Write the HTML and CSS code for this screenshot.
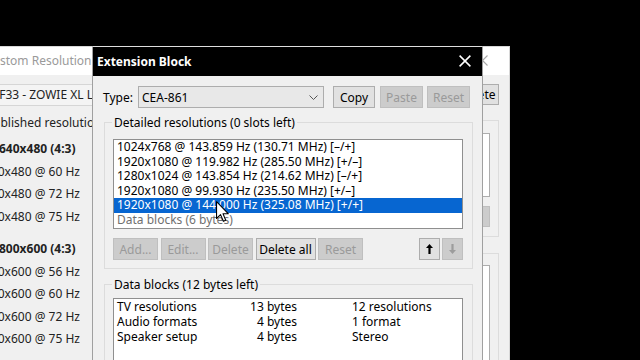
FILE: index.html
```html
<!DOCTYPE html>
<html lang="en">
<head>
    <meta charset="UTF-8">
    <meta name="viewport" content="width=device-width, initial-scale=1.0">
    <title>Extension Block</title>
    <link rel="stylesheet" href="styles.css">
</head>
<body>

    <!-- main CRU window, behind the dialog -->
    <div class="back-win">
        <div class="back-title">
            <span>Custom Resolution Utility</span>
            <svg class="back-close" width="11" height="11" viewBox="0 0 11 11">
                <path d="M0.5 0.5 L10.5 10.5 M10.5 0.5 L0.5 10.5" stroke="#a8a8a8" stroke-width="1.1" fill="none"/>
            </svg>
        </div>
        <div class="back-body">
            <div class="back-left">
                <div class="back-combo">BNQ7F33 - ZOWIE XL LCD</div>
                <fieldset class="back-group">
                    <legend>Established resolutions</legend>
                    <div class="res-head">640x480 (4:3)</div>
                    <div class="res-item">640x480 @ 60 Hz</div>
                    <div class="res-item">640x480 @ 72 Hz</div>
                    <div class="res-item">640x480 @ 75 Hz</div>
                    <div class="res-head next">800x600 (4:3)</div>
                    <div class="res-item">800x600 @ 56 Hz</div>
                    <div class="res-item">800x600 @ 60 Hz</div>
                    <div class="res-item">800x600 @ 72 Hz</div>
                    <div class="res-item">800x600 @ 75 Hz</div>
                </fieldset>
            </div>
            <div class="back-right">
                <button class="btn back-btn">Delete</button>
                <div class="back-box">
                    <div class="back-list"></div>
                    <div class="back-bar"></div>
                </div>
                <div class="back-box second">
                    <div class="back-list tall"></div>
                </div>
            </div>
        </div>
    </div>

    <!-- Extension Block dialog -->
    <div class="dialog">
        <div class="dlg-title">
            <span>Extension Block</span>
            <svg width="12" height="12" viewBox="0 0 12 12">
                <path d="M0.6 0.6 L11.4 11.4 M11.4 0.6 L0.6 11.4" stroke="#fff" stroke-width="1.5" fill="none"/>
            </svg>
        </div>
        <div class="dlg-body">
            <div class="type-row">
                <span class="type-label">Type:</span>
                <div class="combo">
                    <span>CEA-861</span>
                    <svg width="9" height="5" viewBox="0 0 9 5">
                        <path d="M0.5 0.5 L4.5 4.5 L8.5 0.5" stroke="#555" stroke-width="1" fill="none"/>
                    </svg>
                </div>
                <button class="btn btn-copy">Copy</button>
                <button class="btn btn-paste" disabled>Paste</button>
                <button class="btn btn-reset" disabled>Reset</button>
            </div>

            <fieldset class="group">
                <legend>Detailed resolutions (0 slots left)</legend>
                <ul class="listbox">
                    <li>1024x768 @ 143.859 Hz (130.71 MHz) [–/+]</li>
                    <li>1920x1080 @ 119.982 Hz (285.50 MHz) [+/–]</li>
                    <li>1280x1024 @ 143.854 Hz (214.62 MHz) [–/+]</li>
                    <li>1920x1080 @ 99.930 Hz (235.50 MHz) [+/–]</li>
                    <li class="selected">1920x1080 @ 144.000 Hz (325.08 MHz) [+/+]</li>
                    <li class="muted">Data blocks (6 bytes)</li>
                </ul>
                <div class="btn-row">
                    <button class="btn" disabled>Add...</button>
                    <button class="btn" disabled>Edit...</button>
                    <button class="btn" disabled>Delete</button>
                    <button class="btn btn-wide">Delete all</button>
                    <button class="btn" disabled>Reset</button>
                    <button class="btn btn-icon btn-up">
                        <svg width="7" height="10" viewBox="0 0 7 10"><path d="M3.5 0 L7 4 H4.6 V10 H2.4 V4 H0 Z" fill="#000"/></svg>
                    </button>
                    <button class="btn btn-icon" disabled>
                        <svg width="7" height="10" viewBox="0 0 7 10"><path d="M3.5 10 L7 6 H4.6 V0 H2.4 V6 H0 Z" fill="#9c9c9c"/></svg>
                    </button>
                </div>
            </fieldset>

            <fieldset class="group">
                <legend>Data blocks (12 bytes left)</legend>
                <div class="listbox data-list">
                    <span>TV resolutions</span><span class="size">13 bytes</span><span class="info">12 resolutions</span>
                    <span>Audio formats</span><span class="size">4 bytes</span><span class="info">1 format</span>
                    <span>Speaker setup</span><span class="size">4 bytes</span><span class="info">Stereo</span>
                </div>
            </fieldset>
        </div>
    </div>

    <svg class="cursor" width="13" height="22" viewBox="0 0 12 20">
        <path d="M0.5 0.5 L0.5 16 L4.2 12.4 L6.8 18.6 L9 17.7 L6.5 11.6 L11.3 11.6 Z" fill="#fff" stroke="#000" stroke-width="1" stroke-linejoin="round"/>
    </svg>

</body>
</html>
```

FILE: styles.css
```css
* {
    box-sizing: border-box;
}

body {
    margin: 0;
    width: 640px;
    height: 360px;
    overflow: hidden;
    position: relative;
    background-color: #000;
    font-family: "Noto Sans", sans-serif;
    font-size: 12px;
    color: #000;
}

.btn {
    height: 22px;
    padding: 0;
    border: 1px solid #adadad;
    background-color: #e1e1e1;
    font: inherit;
    color: #000;
    display: flex;
    align-items: center;
    justify-content: center;
    white-space: nowrap;
    overflow: hidden;
}

.btn:disabled {
    background-color: #cccccc;
    border-color: #bfbfbf;
    color: #9a9a9a;
}

/* ---- window behind ---- */

.back-win {
    position: absolute;
    left: -60px;
    top: 46px;
    width: 570px;
    height: 330px;
    background-color: #f0f0f0;
    border: 1px solid #d8d8d8;
    display: flex;
    flex-direction: column;
}

.back-title {
    height: 28px;
    flex-shrink: 0;
    background-color: #fff;
    color: #9a9a9a;
    display: flex;
    align-items: center;
    justify-content: space-between;
    padding: 0 21px 2px 44px;
}

.back-body {
    flex: 1;
    display: flex;
    padding-right: 10px;
}

.back-left {
    flex: 1;
    padding-left: 21px;
}

.back-combo {
    margin-top: 9px;
    height: 22px;
    line-height: 20px;
    padding-left: 3px;
    border: 1px solid #d6d6d6;
    background-color: #f4f4f4;
    color: #222;
}

.back-group {
    margin: 9px 0 0 0;
    padding: 8px 12px 0 12px;
    border: 1px solid #dcdcdc;
    height: 300px;
}

.back-group legend {
    padding: 0 2px;
    line-height: 15px;
    color: #222;
}

.res-head {
    line-height: 22.5px;
    padding-left: 24px;
    font-weight: bold;
    color: #222;
}

.res-head.next {
    margin-top: 10px;
}

.res-item {
    line-height: 22.5px;
    padding-left: 9px;
    color: #222;
}

.back-right {
    width: 90px;
    display: flex;
    flex-direction: column;
    align-items: flex-end;
}

.back-btn {
    margin-top: 9px;
    width: 44px;
    height: 21px;
    padding: 0 3px;
    justify-content: flex-start;
}

.back-box {
    align-self: stretch;
    margin-top: 15px;
    height: 117px;
    border: 1px solid #dcdcdc;
    padding: 12px 8px 0 0;
}

.back-box.second {
    margin-top: 16px;
    height: 150px;
    padding-top: 11px;
}

.back-list {
    height: 64px;
    background-color: #fff;
    border: 1px solid #adadad;
}

.back-list.tall {
    height: 140px;
}

.back-bar {
    margin: 9px 0 0 auto;
    width: 70px;
    height: 21px;
    background-color: #cccccc;
    border: 1px solid #bfbfbf;
}

/* ---- Extension Block dialog ---- */

.dialog {
    position: absolute;
    left: 92px;
    top: 46px;
    width: 391px;
    height: 330px;
    background-color: #f0f0f0;
    border: 1px solid #a0a0a0;
    border-top-color: #dedede;
}

.dlg-title {
    height: 29px;
    background-color: #000;
    color: #fff;
    font-weight: bold;
    display: flex;
    align-items: center;
    justify-content: space-between;
    padding: 0 11px 1px 4px;
}

.dlg-body {
    padding: 10px 10px 0 10px;
}

.type-row {
    display: flex;
    align-items: center;
    height: 22px;
}

.type-label {
    width: 35px;
}

.combo {
    width: 186px;
    height: 22px;
    margin-right: 9px;
    padding: 0 5px 0 3px;
    border: 1px solid #adadad;
    background-color: #e8e8e8;
    display: flex;
    align-items: center;
    justify-content: space-between;
}

.btn-copy {
    width: 42px;
    margin-right: 5px;
}

.btn-paste {
    width: 43px;
    margin-right: 4px;
}

.btn-reset {
    width: 43px;
}

.group {
    margin: 7px -1px 0 1px;
    padding: 9px 9px 8px 8px;
    border: 1px solid #dcdcdc;
    min-width: 0;
}

.group + .group {
    margin-top: 8px;
    padding-top: 6px;
}

.group legend {
    padding: 0 2px;
    margin-left: -1px;
    line-height: 15px;
}

.listbox {
    margin: 0;
    padding: 0;
    list-style: none;
    height: 90px;
    background-color: #fff;
    border: 1px solid #8f8f8f;
}

.listbox li {
    line-height: 14.6px;
    padding-left: 3px;
    white-space: nowrap;
}

.listbox li.selected {
    background-color: #0766d1;
    color: #fff;
}

.listbox li.muted {
    color: #707070;
}

.btn-row {
    display: flex;
    gap: 2.5px;
    margin-top: 9px;
}

.btn-row .btn {
    width: 45px;
}

.btn-row .btn-wide {
    width: 60px;
}

.btn-row .btn-icon {
    width: 21px;
}

.btn-row .btn-up {
    margin-left: auto;
}

.data-list {
    height: 100px;
    padding-left: 3px;
    display: grid;
    grid-template-columns: 130px 50px 1fr;
    grid-auto-rows: 15px;
    line-height: 15px;
    align-content: start;
}

.data-list .size {
    text-align: right;
}

.data-list .info {
    padding-left: 55px;
}

.cursor {
    position: absolute;
    left: 216px;
    top: 201px;
}
```
